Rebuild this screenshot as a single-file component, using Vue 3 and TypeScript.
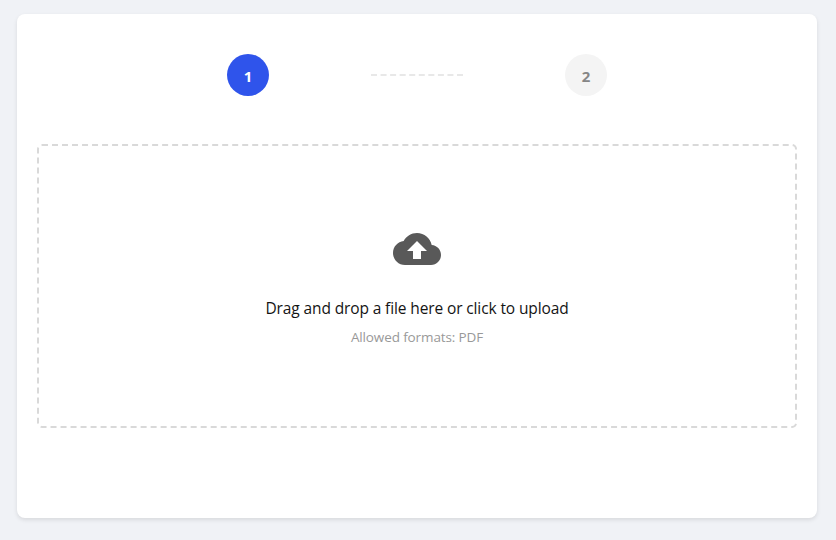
<script setup lang="ts">
import { ref } from 'vue'

const current = ref<number>(1)
const formats: string[] = ['PDF']
</script>

<template>
  <main class="page">
    <section class="card">
      <div class="stepper">
        <div class="step" :class="{ active: current === 1 }">1</div>
        <div class="connector"></div>
        <div class="step" :class="{ active: current === 2 }">2</div>
      </div>
      <div class="dropzone">
        <svg class="icon" viewBox="0 0 24 24" aria-hidden="true">
          <path d="M19.35 10.04C18.67 6.59 15.64 4 12 4 9.11 4 6.6 5.64 5.35 8.04 2.34 8.36 0 10.91 0 14c0 3.31 2.69 6 6 6h13c2.76 0 5-2.24 5-5 0-2.64-2.05-4.78-4.65-4.96zM14 13v4h-4v-4H7l5-5 5 5h-3z" />
        </svg>
        <p class="title"><span>Drag and drop a file here or click to upload</span></p>
        <p class="hint"><span>Allowed formats: {{ formats.join(', ') }}</span></p>
      </div>
    </section>
  </main>
</template>

<style>
body {
  background: #f0f2f6;
}
</style>

<style scoped>
.page {
  box-sizing: border-box;
  height: 540px;
  padding: 14px 19px 22px 17px;
  font-family: 'Segoe UI', 'Open Sans', 'Noto Sans', sans-serif;
}
.card {
  box-sizing: border-box;
  height: 504px;
  padding: 40px 20px;
  background: #fff;
  border-radius: 8px;
  box-shadow: 0 2px 4px rgba(0, 0, 0, 0.1);
}
.stepper {
  display: flex;
  align-items: center;
  justify-content: center;
  gap: 102px;
  margin-bottom: 48px;
}
.step {
  width: 42px;
  height: 42px;
  border-radius: 50%;
  background: #f4f4f4;
  color: #868686;
  font-size: 15px;
  font-weight: 700;
  line-height: 44px;
  text-align: center;
}
.step.active {
  background: #2f54eb;
  color: #fff;
}
.connector {
  width: 92px;
  border-top: 2px dashed #e8e8e8;
}
.dropzone {
  box-sizing: border-box;
  height: 284px;
  display: flex;
  flex-direction: column;
  align-items: center;
  padding-top: 79px;
  border: 2px dashed #d9d9d9;
  border-radius: 5px;
  cursor: pointer;
}
.icon {
  width: 48px;
  height: 48px;
  fill: #595959;
}
p {
  margin: 0;
  white-space: nowrap;
}
.title {
  margin-top: 23px;
  font-size: 15.5px;
  letter-spacing: -0.12px;
  line-height: 24px;
  color: #141414;
}
.hint {
  margin-top: 6px;
  font-size: 13.5px;
  letter-spacing: -0.12px;
  line-height: 22px;
  color: #999;
}
</style>
